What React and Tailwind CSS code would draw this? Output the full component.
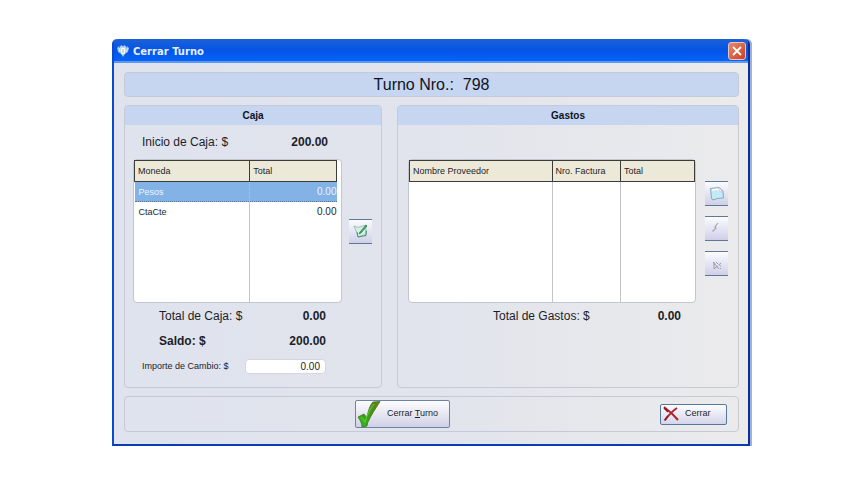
import React from "react";

const panel = "rounded-[4px] border border-[#c6cad6]";
const panelTitle =
  "flex h-[19px] items-center justify-center rounded-t-[3px] bg-[#c6d5f0] text-[10px] leading-4 font-bold text-[#10131f]";
const headCell =
  "h-[21px] border border-[#3c3c38] bg-[#ece9d8] px-[3px] text-left align-middle font-normal";
const toolButton =
  "flex h-[25px] w-[23px] items-center justify-center border-y border-[#5f7896] bg-linear-to-b from-[#fbfbff] to-[#cfd0e8]";
const smallText = "text-[9px]";

function AppIcon() {
  return (
    <svg viewBox="0 0 14 14" className="h-[14px] w-[14px]" aria-hidden="true">
      <path d="M1 4 3 2l1 2 1-3 2 1 2-1 1 3 1-2 2 2-1 4-3 2-2 3-2-3-3-2z" fill="#8fc0ef" />
      <path d="M3 4l1 4M5 2v5M9 2v5M12 4l-2 4" stroke="#dff0ff" strokeWidth="1" />
      <ellipse cx="7" cy="7" rx="2.2" ry="3.4" fill="#fffbe6" />
      <path d="M7 5v4" stroke="#9fb8a0" strokeWidth="1" />
    </svg>
  );
}

function EditIcon() {
  return (
    <svg viewBox="0 0 16 16" className="h-4 w-4" aria-hidden="true">
      <path d="M1 3l4 1.500L13 2l-.5 9.500L5 14l-1-4z" fill="#d6efe4" stroke="#8fb5ab" strokeWidth=".8" />
      <path d="M4 9l1 5 8-1.500.5-5" fill="none" stroke="#3f9470" strokeWidth="1" />
      <path d="M13 2L7 9l-1 2 2-1 6-7z" fill="#4fa86b" stroke="#277b4a" strokeWidth=".7" />
    </svg>
  );
}

function NewIcon() {
  return (
    <svg viewBox="0 0 16 16" className="h-4 w-4" aria-hidden="true">
      <path d="M1.500 2.500L10 1.500l4 3.500.5 7-6 .5-5 1.500-1-2z" fill="#c3eaf6" stroke="#7f9fb6" strokeWidth=".9" />
      <path d="M3 4l6-1 1 3" fill="none" stroke="#ffffff" strokeWidth="1.500" />
      <path d="M10 1.500v4l4 .5z" fill="#f6f7fb" stroke="#b9bfce" strokeWidth=".7" />
    </svg>
  );
}

function PencilIcon() {
  return (
    <svg viewBox="0 0 16 16" className="h-4 w-4" aria-hidden="true">
      <path d="M9 2L6 6l1.500.5L3.500 10.500" fill="none" stroke="#a3a5b3" strokeWidth="1.200" />
      <path d="M10 3L7.500 7" stroke="#ffffff" strokeWidth=".8" />
    </svg>
  );
}

function DeleteIcon() {
  return (
    <svg viewBox="0 0 16 16" className="h-4 w-4" aria-hidden="true">
      <path
        d="M5 6v7M5 9l2-2M4 6l6 7M5 13l7-6M7 6l2 2M10 10h2M11 12l1 1"
        fill="none"
        stroke="#9c9cab"
        strokeWidth="1"
      />
      <path d="M6 7l5 4" stroke="#f7f7fc" strokeWidth=".7" />
    </svg>
  );
}

function CheckIcon() {
  return (
    <svg viewBox="0 0 26 28" className="h-[28px] w-[26px] shrink-0" aria-hidden="true">
      <defs>
        <linearGradient id="tick" x1="1" y1="0" x2="0" y2="1">
          <stop offset="0" stopColor="#6f7d0c" />
          <stop offset=".5" stopColor="#3f9a12" />
          <stop offset="1" stopColor="#2fc322" />
        </linearGradient>
      </defs>
      <path
        d="M2 17l6-3 3 4C12 11 14 5 17 2l7-.5C20 8 15 15 11.500 23L11 26l-5 1C6 23 4 20 2 17z"
        fill="url(#tick)"
        stroke="#3b7417"
        strokeWidth=".8"
      />
      <path d="M5 17l4 5C11 15 14 9 18 4" fill="none" stroke="#5cc63c" strokeWidth="1.200" />
    </svg>
  );
}

function CrossIcon() {
  return (
    <svg viewBox="0 0 16 16" className="h-4 w-4 shrink-0" aria-hidden="true">
      <path d="M1 1c4 3 9 7 14 13M1.500 14.500C5 10 9 5 14 2" fill="none" stroke="#b3202c" strokeWidth="2" />
      <path d="M1 2l4 4M2 14l3-4" stroke="#8c1620" strokeWidth="1.500" />
    </svg>
  );
}

function TitleBar() {
  return (
    <header className="flex h-6 items-center rounded-t-[4px] border-b-2 border-[#5f97ea] bg-linear-to-b from-[#1c62d6] via-[#0554e6] to-[#0364f8] pt-px pr-[2px] pl-[2px]">
      <AppIcon />
      <h1 className="ml-[3px] flex-1 pt-[2px] font-['DejaVu_Sans',sans-serif] text-[10px] leading-4 font-bold text-[#e4eeff]">
        Cerrar Turno
      </h1>
      <button
        type="button"
        aria-label="Cerrar ventana"
        className="flex h-[18px] w-[18px] items-center justify-center rounded-[3px] border border-[#e8c4c4] bg-linear-to-br from-[#e8896c] to-[#c8401c]"
      >
        <svg viewBox="0 0 12 12" className="h-3 w-3" aria-hidden="true">
          <path d="M2 2l8 8M10 2l-8 8" stroke="#fff" strokeWidth="1.800" />
        </svg>
      </button>
    </header>
  );
}

function Caja() {
  return (
    <section className={`${panel} pb-[7px]`}>
      <h2 className={panelTitle}>Caja</h2>
      <div className="flex h-[34px] items-center pr-[53px] pl-[17px] text-[12px]">
        <span className="flex-1">Inicio de Caja: $</span>
        <b>200.00</b>
      </div>
      <div className="flex items-center gap-[7px] pr-[9px] pl-2">
        <div className="h-[144px] min-w-0 flex-1 rounded-[4px] border border-[#c3c6d0] bg-white pr-1">
          <table className={`${smallText} h-full w-full table-fixed border-collapse leading-3`}>
            <colgroup>
              <col className="w-[57%]" />
              <col />
            </colgroup>
            <thead>
              <tr>
                <th className={headCell}>Moneda</th>
                <th className={headCell}>Total</th>
              </tr>
            </thead>
            <tbody>
              <tr className="h-5 bg-[#82b2e6] text-[#eef5ff]">
                <td className="border-r border-b border-dotted border-[#b9c4d0] border-b-[#54749a] px-1">Pesos</td>
                <td className="border-b border-dotted border-[#54749a] text-right text-[10px]">0.00</td>
              </tr>
              <tr className="h-[21px]">
                <td className="border-r border-[#c4c4c4] px-1">CtaCte</td>
                <td className="text-right text-[10px]">0.00</td>
              </tr>
              <tr>
                <td className="border-r border-[#c4c4c4]" />
                <td />
              </tr>
            </tbody>
          </table>
        </div>
        <button type="button" aria-label="Editar moneda" className={toolButton}>
          <EditIcon />
        </button>
      </div>
      <div className="flex h-[26px] items-center pr-[55px] pl-[34px] text-[12px]">
        <span className="flex-1">Total de Caja: $</span>
        <b>0.00</b>
      </div>
      <div className="flex h-6 items-center pr-[55px] pl-[34px] text-[12px] font-bold">
        <span className="flex-1">Saldo: $</span>
        <span>200.00</span>
      </div>
      <div className={`${smallText} flex h-[27px] items-center justify-between pr-[55px] pl-[17px]`}>
        <label htmlFor="cambio">Importe de Cambio: $</label>
        <input
          id="cambio"
          type="text"
          defaultValue="0.00"
          className="h-[15px] w-[81px] rounded-[4px] border border-[#d4d6de] bg-white pr-[5px] text-right text-[10px] leading-3"
        />
      </div>
    </section>
  );
}

function Gastos() {
  return (
    <section className={`${panel} pb-[7px]`}>
      <h2 className={panelTitle}>Gastos</h2>
      <div className="flex gap-[9px] pt-[34px] pr-[10px] pl-[10px]">
        <div className="h-[144px] min-w-0 flex-1 rounded-[4px] border border-[#c3c6d0] bg-white">
          <table className={`${smallText} h-full w-full table-fixed border-collapse leading-3`}>
            <colgroup>
              <col className="w-[50%]" />
              <col className="w-[24%]" />
              <col />
            </colgroup>
            <thead>
              <tr>
                <th className={headCell}>Nombre Proveedor</th>
                <th className={headCell}>Nro. Factura</th>
                <th className={headCell}>Total</th>
              </tr>
            </thead>
            <tbody>
              <tr>
                <td className="border-r border-[#c4c4c4]" />
                <td className="border-r border-[#c4c4c4]" />
                <td />
              </tr>
            </tbody>
          </table>
        </div>
        <div className="flex flex-col gap-[10px] pt-[22px]">
          <button type="button" aria-label="Nuevo gasto" className={toolButton}>
            <NewIcon />
          </button>
          <button type="button" aria-label="Editar gasto" className={toolButton}>
            <PencilIcon />
          </button>
          <button type="button" aria-label="Borrar gasto" className={toolButton}>
            <DeleteIcon />
          </button>
        </div>
      </div>
      <div className="flex h-[26px] items-center pr-[57px] pl-[95px] text-[12px]">
        <span className="flex-1">Total de Gastos: $</span>
        <b>0.00</b>
      </div>
    </section>
  );
}

export default function App() {
  return (
    <div className="min-h-screen bg-white px-28 pt-[39px] font-['Liberation_Sans',Arial,sans-serif] text-[#1c1e28]">
      <main className="rounded-t-[5px] border-x-2 border-b-2 border-[#0b49cf] border-r-[#0a2f9c] border-b-[#0a3cb8] bg-linear-to-r from-[#dfe3ee] via-[#e1e4ec] to-[#ebebec] shadow-[2px_0_0_#9db2d8]">
        <TitleBar />
        <div className="flex flex-col gap-2 pt-[9px] pr-[9px] pb-3 pl-[10px]">
          <div className={`${panel} flex h-[25px] items-center justify-center bg-[#c6d5f0] text-[16px] text-[#10131f]`}>
            <span className="whitespace-pre">Turno Nro.:  798</span>
          </div>
          <div className="grid grid-cols-[258fr_342fr] gap-[15px]">
            <Caja />
            <Gastos />
          </div>
          <footer className={`${panel} flex h-[36px] items-center justify-between pr-[11px] pl-[230px]`}>
            <button
              type="button"
              className={`${smallText} flex h-[28px] w-[95px] items-center gap-[5px] rounded-[2px] border border-[#6b83a6] bg-linear-to-b from-[#fdfdff] to-[#d0d1e6]`}
            >
              <CheckIcon />
              <span>
                Cerrar <u>T</u>urno
              </span>
            </button>
            <button
              type="button"
              className={`${smallText} flex h-[21px] w-[67px] items-center gap-[6px] rounded-[2px] border border-[#54789f] bg-linear-to-b from-[#fdfdff] to-[#d4d5e8] pl-[2px]`}
            >
              <CrossIcon />
              <span>Cerrar</span>
            </button>
          </footer>
        </div>
      </main>
    </div>
  );
}
